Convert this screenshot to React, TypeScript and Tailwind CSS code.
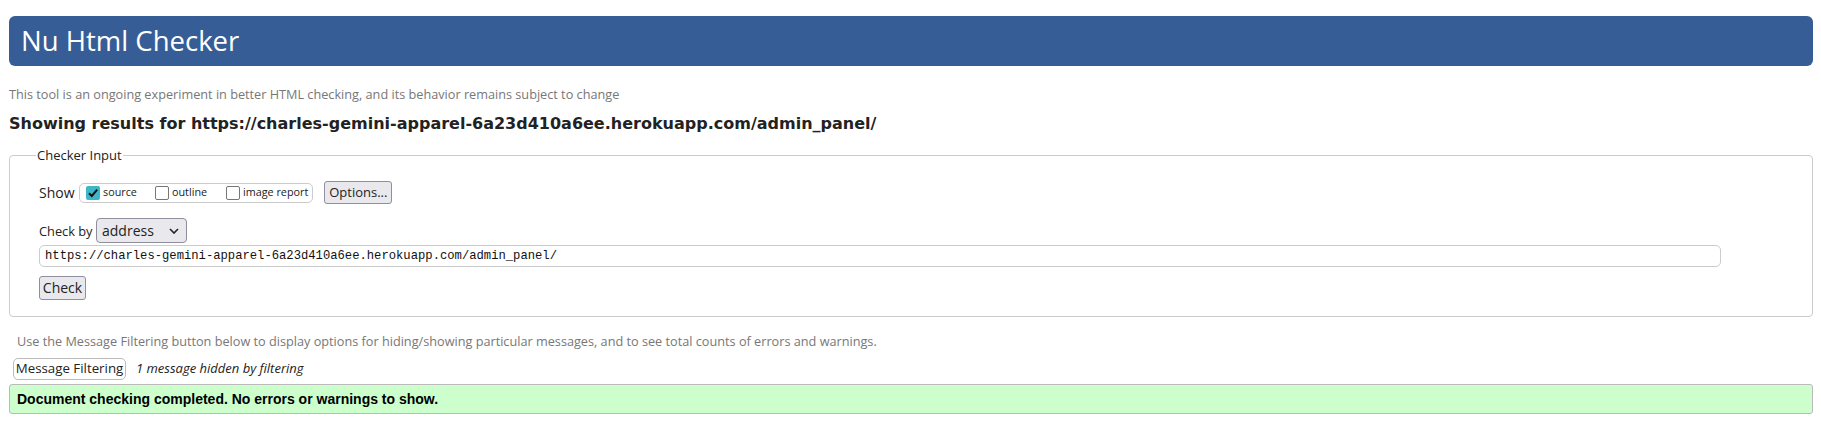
import React from "react";

function Box({ checked }: { checked?: boolean }) {
  if (checked) {
    return (
      <span className="flex h-[14px] w-[14px] shrink-0 items-center justify-center rounded-[2px] bg-[#3eb6c8]">
        <svg width="12" height="12" viewBox="0 0 12 12">
          <path d="M2 6.2 L4.8 9 L10.2 2.6" fill="none" stroke="#111" strokeWidth="2" />
        </svg>
      </span>
    );
  }
  return <span className="h-[14px] w-[14px] shrink-0 rounded-[2px] border-[1.5px] border-[#767676] bg-white" />;
}

export default function App() {
  return (
    <div className="min-h-[423px] bg-white pl-[9px] pr-[8px] pt-[16px] font-['Open_Sans',sans-serif] text-[#222]">
      <h1 className="flex h-[50px] items-center rounded-[6px] bg-[#365d95] px-[12px] text-[27.5px] font-normal leading-none text-white">
        Nu Html Checker
      </h1>
      <p className="mt-[18px] text-[12.7px] leading-[20px] text-[#777]">
        This tool is an ongoing experiment in better HTML checking, and its behavior remains subject to change
      </p>
      <h2 className="mt-[10px] font-['DejaVu_Sans',sans-serif] text-[16px] font-bold leading-[20px] text-[#222]">
        Showing results for https://charles-gemini-apparel-6a23d410a6ee.herokuapp.com/admin_panel/
      </h2>
      <fieldset className="mt-[11px] rounded-[4px] border border-[#ccc] px-[26px] pb-[16px]">
        <legend className="px-[1px] text-[13px] leading-[20px] text-[#222]">Checker Input</legend>
        <div className="pl-[3px]">
          <div className="mt-[16px] flex items-center">
            <span className="w-[40px] shrink-0 whitespace-nowrap text-[14px] leading-[20px]">Show</span>
            <div className="flex h-[20px] items-center rounded-[5px] border border-[#ccc] pl-[6px] pr-[4px] text-[10.8px]">
              <label className="flex w-[69px] items-center">
                <Box checked />
                <span className="ml-[3px]">source</span>
              </label>
              <label className="flex w-[71px] items-center">
                <Box />
                <span className="ml-[3px]">outline</span>
              </label>
              <label className="flex items-center">
                <Box />
                <span className="ml-[3px]">image report</span>
              </label>
            </div>
            <button className="ml-[11px] h-[23px] w-[68px] rounded-[3px] border border-[#8f8f9d] bg-[#e9e9ed] text-[13px] leading-none">
              Options...
            </button>
          </div>
          <div className="mt-[14px] flex items-center">
            <span className="w-[57px] shrink-0 whitespace-nowrap text-[12.8px] leading-[20px]">Check by</span>
            <div className="flex h-[25px] w-[91px] items-center justify-between rounded-[4px] border border-[#8f8f9d] bg-[#e9e9ed] pl-[5px] pr-[7px] text-[14px]">
              <span>address</span>
              <svg width="10" height="6" viewBox="0 0 10 6">
                <path d="M1 1 L5 5 L9 1" fill="none" stroke="#222" strokeWidth="1.6" />
              </svg>
            </div>
          </div>
          <div className="mr-[65px] mt-[2px] flex h-[22px] items-center rounded-[5px] border border-[#ccc] pl-[5px] font-['Liberation_Mono',monospace] text-[12.2px] text-[#111]">
            https://charles-gemini-apparel-6a23d410a6ee.herokuapp.com/admin_panel/
          </div>
          <button className="mt-[9px] h-[24px] w-[47px] rounded-[3px] border border-[#8f8f9d] bg-[#e9e9ed] text-[14px] leading-none">
            Check
          </button>
        </div>
      </fieldset>
      <p className="mt-[14px] pl-[8px] text-[12.7px] leading-[20px] text-[#777]">
        Use the Message Filtering button below to display options for hiding/showing particular messages, and to see total counts of errors and warnings.
      </p>
      <div className="mt-[7px] flex items-center">
        <button className="ml-[4px] h-[22px] w-[113px] rounded-[5px] border border-[#bbb] bg-white text-[13.3px] leading-none">
          Message Filtering
        </button>
        <span className="ml-[10px] text-[13px] italic">1 message hidden by filtering</span>
      </div>
      <div className="mt-[4px] flex h-[30px] items-center rounded-[3px] border border-[#bbb] bg-[#ccffcc] pl-[7px] font-['Liberation_Sans',sans-serif] text-[14px] font-bold text-black">
        Document checking completed. No errors or warnings to show.
      </div>
    </div>
  );
}
